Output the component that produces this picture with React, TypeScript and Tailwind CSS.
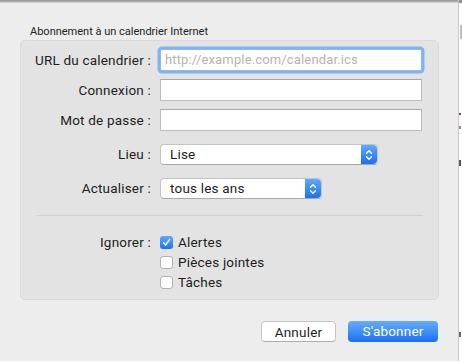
import React from 'react';

const font = { fontFamily: 'Roboto, "Liberation Sans", sans-serif' };

const Stepper = () => (
  <div className="flex h-full w-[16px] flex-col items-center justify-center rounded-r-[4px] bg-gradient-to-b from-[#5fa9fb] to-[#1b6ff1]">
    <svg width="8" height="12" viewBox="0 0 8 12" fill="none" stroke="white" strokeWidth="1.4" strokeLinecap="round" strokeLinejoin="round">
      <path d="M1.5 4.2 4 1.7 6.5 4.2" />
      <path d="M1.5 7.8 4 10.3 6.5 7.8" />
    </svg>
  </div>
);

const Select = ({ value, width }: { value: string; width: string }) => (
  <div className={`flex h-[21px] ${width} items-stretch rounded-[4px] border border-[#c3c3c3] border-b-[#a9a9a9] bg-white`}>
    <div className="flex flex-1 items-center pl-[9px] text-[13.5px] tracking-[0.2px] text-[#1d1d1d]">{value}</div>
    <Stepper />
  </div>
);

const Check = ({ checked, label }: { checked?: boolean; label: string }) => (
  <div className="flex h-[20px] items-center">
    {checked ? (
      <div className="flex h-[13px] w-[13px] items-center justify-center rounded-[3px] bg-gradient-to-b from-[#5ea8fb] to-[#1d72f2]">
        <svg width="9" height="9" viewBox="0 0 9 9" fill="none" stroke="white" strokeWidth="1.5" strokeLinecap="round" strokeLinejoin="round">
          <path d="M1.6 4.8 3.6 7 7.5 1.6" />
        </svg>
      </div>
    ) : (
      <div className="h-[13px] w-[13px] rounded-[3px] border border-[#b2b2b2] bg-white" />
    )}
    <span className="ml-[5px] text-[13.5px] tracking-[0.2px] text-[#1d1d1d]">{label}</span>
  </div>
);

const Label = ({ children }: { children: React.ReactNode }) => (
  <div className="w-[131px] shrink-0 pr-[1px] text-right text-[13.5px] tracking-[0.2px] text-[#1d1d1d]">{children}</div>
);

export default function App() {
  return (
    <div className="flex h-[363px] w-[462px] overflow-hidden bg-white" style={font}>
      <div className="relative flex h-[361px] w-[459px] flex-col border-r border-[#c9c9c9] bg-[#ededed]">
        <div className="h-[3px] w-full bg-gradient-to-b from-[#8e8e8e] to-[#d8d8d8]" />
        <div className="ml-[30px] mt-[21px] h-[16px] text-[11px] leading-[16px] text-[#222]">
          Abonnement à un calendrier Internet
        </div>

        <div className="ml-[20px] flex h-[260px] w-[419px] flex-col rounded-[5px] border border-[#dadada] bg-[#e3e3e3] pt-[8px]">
          <div className="flex h-[22px] items-center">
            <Label>URL du calendrier :</Label>
            <div className="ml-[8px] flex h-[22px] w-[262px] items-center rounded-[2px] border border-[#8fb9ee] bg-white pl-[4px] text-[13px] tracking-[0.15px] text-[#b4b4b4] shadow-[0_0_0_2.5px_#80b3f1]">
              http://example.com/calendar.ics
            </div>
          </div>
          <div className="mt-[8px] flex h-[22px] items-center">
            <Label>Connexion :</Label>
            <div className="ml-[8px] h-[22px] w-[262px] border border-[#bdbdbd] border-t-[#a8a8a8] bg-white" />
          </div>
          <div className="mt-[8px] flex h-[22px] items-center">
            <Label>Mot de passe :</Label>
            <div className="ml-[8px] h-[22px] w-[262px] border border-[#bdbdbd] border-t-[#a8a8a8] bg-white" />
          </div>
          <div className="mt-[13px] flex h-[21px] items-center">
            <Label>Lieu :</Label>
            <div className="ml-[8px]">
              <Select value="Lise" width="w-[218px]" />
            </div>
          </div>
          <div className="mt-[13px] flex h-[21px] items-center">
            <Label>Actualiser :</Label>
            <div className="ml-[8px]">
              <Select value="tous les ans" width="w-[162px]" />
            </div>
          </div>
          <div className="ml-[15px] mt-[16px] h-px w-[387px] bg-[#d0d0d0]" />
          <div className="mt-[16px] flex">
            <div className="flex h-[20px] items-center">
              <Label>Ignorer :</Label>
            </div>
            <div className="ml-[8px] flex flex-col">
              <Check checked label="Alertes" />
              <Check label="Pièces jointes" />
              <Check label="Tâches" />
            </div>
          </div>
        </div>

        <div className="mt-[21px] flex justify-end gap-[12px] pr-[20px]">
          <button className="h-[21px] w-[75px] rounded-[4px] border border-[#c6c6c6] border-b-[#aeaeae] bg-white text-[13.5px] tracking-[0.2px] text-[#1d1d1d]">
            Annuler
          </button>
          <button className="h-[21px] w-[90px] rounded-[4px] bg-gradient-to-b from-[#64acfb] to-[#1a6ff1] text-[13.5px] tracking-[0.2px] text-white">
            S'abonner
          </button>
        </div>
      </div>
      <div className="relative flex-1 bg-white">
        <div className="absolute left-0 top-0 h-[3px] w-full bg-[#8e8e8e]" />
        <div className="absolute left-[1px] top-[25px] h-[14px] w-[2px] bg-[#bdbdbd]" />
        <div className="absolute left-0 top-[113px] h-[2px] w-[2px] bg-[#555]" />
        <div className="absolute left-0 top-[126px] h-[3px] w-[2px] bg-[#b08a60]" />
        <div className="absolute left-0 top-[160px] h-[6px] w-[2px] bg-[#555]" />
        <div className="absolute left-0 top-[332px] h-[5px] w-[2px] bg-[#666]" />
      </div>
    </div>
  );
}
